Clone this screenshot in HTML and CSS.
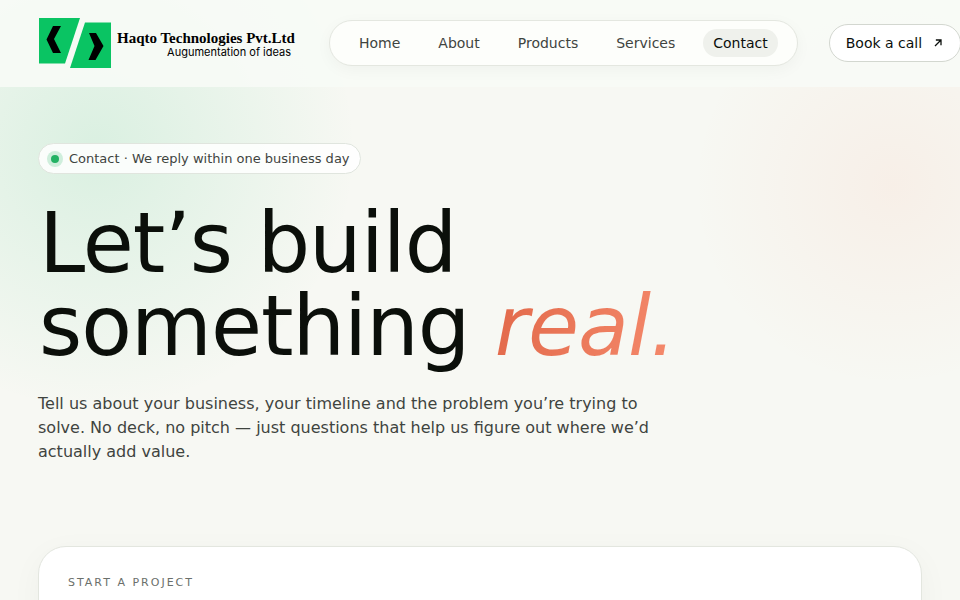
FILE: index.html
```html
<!DOCTYPE html>
<html lang="en">
<head>
    <meta charset="UTF-8">
    <meta name="viewport" content="width=device-width, initial-scale=1.0">
    <title>Contact | Haqto Technologies</title>
    <link rel="stylesheet" href="styles.css">
</head>
<body>
    <header class="site-header">
        <a class="logo" href="#">
            <svg class="logo-mark" viewBox="0 0 74 52" aria-hidden="true">
                <path fill="#0ac463" d="M1 1h41L27 46.500H1z"/>
                <path fill="#0ac463" d="M47 5.500h26V51H32z"/>
                <path fill="#000" d="M15 9h8l-7 13 7 14h-8L8.500 22.500z"/>
                <path fill="#000" d="M51 16h7l7.500 13-8 14h-7l6-14z"/>
            </svg>
            <span class="logo-text">
                <span class="logo-name">Haqto Technologies Pvt.Ltd</span>
                <span class="logo-tagline">Augumentation of ideas</span>
            </span>
        </a>
        <nav class="nav">
            <a href="#">Home</a>
            <a href="#">About</a>
            <a href="#">Products</a>
            <a href="#">Services</a>
            <a href="#" class="active">Contact</a>
        </nav>
        <a class="call-btn" href="#">
            Book a call
            <svg class="arrow" viewBox="0 0 14 14" aria-hidden="true">
                <path d="M3.500 10.500L10.500 3.500M4.500 3.500h6v6"/>
            </svg>
        </a>
    </header>

    <main>
        <section class="hero">
            <p class="badge"><span class="dot"></span>Contact · We reply within one business day</p>
            <h1>Let’s build<br>something <em>real.</em></h1>
            <p class="lead">Tell us about your business, your timeline and the problem you’re trying to solve. No deck, no pitch — just questions that help us figure out where we’d actually add value.</p>
        </section>

        <section class="card">
            <h2>Start a project</h2>
        </section>
    </main>
</body>
</html>
```
FILE: styles.css
```css
* {
    box-sizing: border-box;
}

body {
    margin: 0;
    overflow-x: hidden;
    min-height: 100vh;
    font-family: "DejaVu Sans", sans-serif;
    color: #3f443f;
    background-color: #f7f8f3;
    background-image:
        radial-gradient(circle at 10% 150px, rgba(40, 190, 115, 0.14), rgba(40, 190, 115, 0) 260px),
        radial-gradient(circle at 93% 186px, rgba(250, 120, 80, 0.07), rgba(250, 120, 80, 0) 200px);
    background-repeat: no-repeat;
}

a {
    color: inherit;
    text-decoration: none;
}

.site-header {
    display: flex;
    align-items: center;
    justify-content: space-between;
    gap: 31px;
    padding: 17px 38px 18px;
    background-color: rgba(247, 251, 246, 0.9);
}

.logo {
    display: flex;
    align-items: center;
    gap: 5px;
    flex: 0 0 260px;
}

.logo-mark {
    width: 74px;
    height: 52px;
}

.logo-text {
    display: flex;
    flex-direction: column;
    padding-top: 2px;
    color: #000;
}

.logo-name {
    font: bold 15px/16px "Liberation Serif", serif;
    white-space: nowrap;
}

.logo-tagline {
    padding-right: 4px;
    font: 400 11px/12px Inter, sans-serif;
    text-align: right;
}

.nav {
    display: flex;
    flex-shrink: 0;
    gap: 18px;
    padding: 8px 19px;
    border: 1px solid #e4e7e0;
    border-radius: 999px;
    background-color: #fdfefb;
    box-shadow: 0 4px 16px rgba(20, 30, 20, 0.04);
    font-size: 14px;
    line-height: 28px;
}

.nav a {
    padding: 0 10px;
    border-radius: 999px;
}

.nav .active {
    color: #0b0f0c;
    background-color: #eff1ec;
}

.call-btn {
    display: flex;
    flex-shrink: 0;
    align-items: center;
    gap: 10px;
    padding: 0 16px;
    border: 1px solid #d3d7d0;
    border-radius: 999px;
    background-color: #fff;
    color: #0b0f0c;
    font-size: 14px;
    line-height: 36px;
}

.arrow {
    width: 12px;
    height: 12px;
    fill: none;
    stroke: currentColor;
    stroke-width: 1.5;
}

.hero {
    padding: 56px 38px 82px;
}

.badge {
    display: inline-flex;
    align-items: center;
    gap: 10px;
    margin: 0;
    padding: 0 10px 0 12px;
    border: 1px solid #e0e5de;
    border-radius: 999px;
    background-color: rgba(255, 255, 255, 0.85);
    font-size: 13px;
    line-height: 29px;
}

.dot {
    width: 8px;
    height: 8px;
    border-radius: 50%;
    background-color: #23b264;
    box-shadow: 0 0 0 4px rgba(35, 178, 100, 0.2);
}

h1 {
    margin: 28px 1px 24px;
    color: #0b0f0a;
    font-size: 83px;
    font-weight: 400;
    line-height: 83px;
    letter-spacing: -1px;
}

h1 em {
    background: linear-gradient(100deg, #e2694a, #f58a6c);
    background-clip: text;
    -webkit-background-clip: text;
    color: transparent;
}

.lead {
    max-width: 620px;
    margin: 0;
    font-size: 16px;
    line-height: 24px;
}

.card {
    min-height: 320px;
    margin: 0 38px 80px;
    padding: 28px 29px;
    border: 1px solid #e3e6df;
    border-radius: 28px;
    background-color: #fff;
    box-shadow: 0 8px 32px rgba(20, 30, 20, 0.04);
}

h2 {
    margin: 0;
    color: #6b706b;
    font-size: 11px;
    font-weight: 400;
    line-height: 16px;
    letter-spacing: 2px;
    text-transform: uppercase;
}
```
